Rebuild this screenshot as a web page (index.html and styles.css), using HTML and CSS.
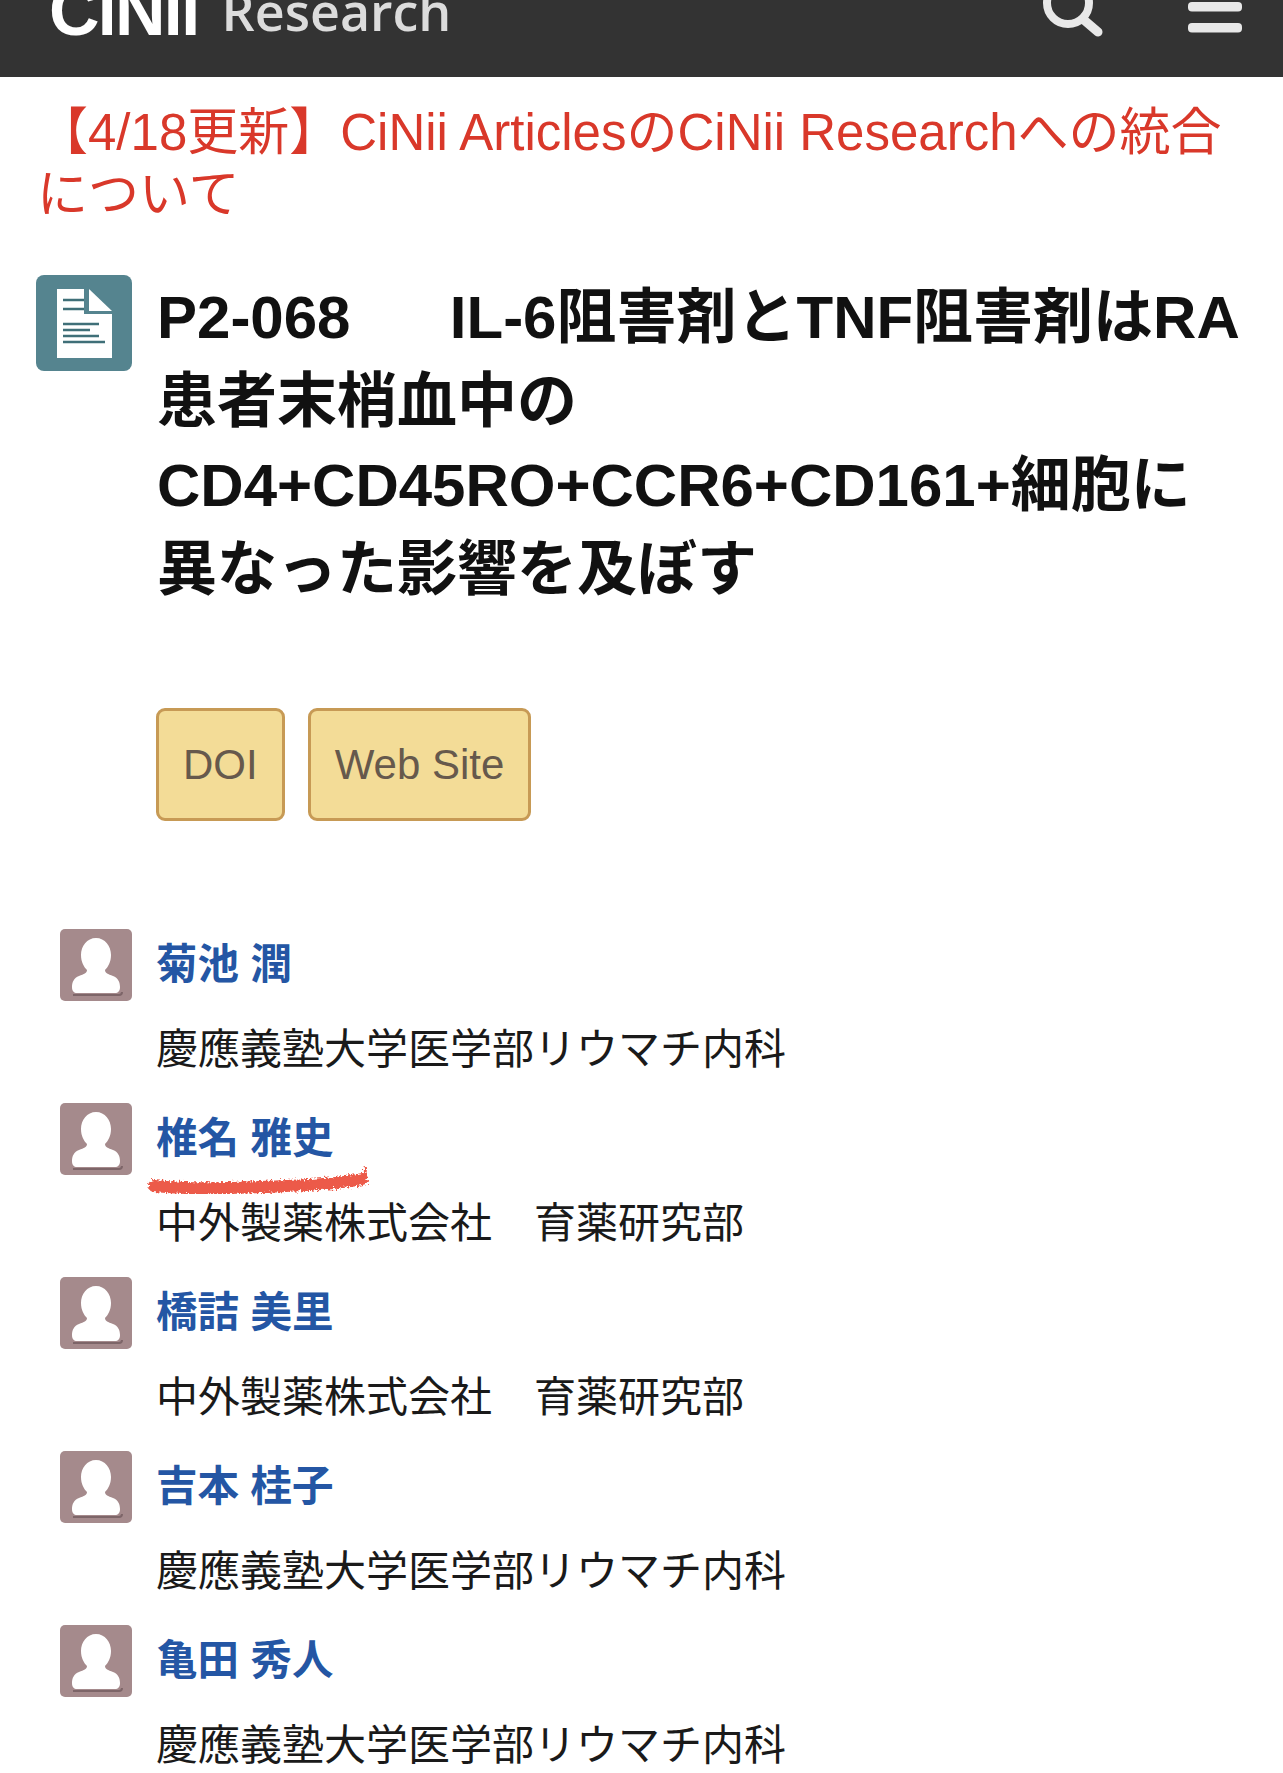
FILE: index.html
```html
<!DOCTYPE html>
<html lang="ja">
  <head>
    <meta charset="utf-8" />
    <title>CiNii Research</title>
    <link rel="stylesheet" href="styles.css">
  </head>
  <body>
    <header class="top-bar">
      <div class="logo">
        <span class="logo-cinii">CiNii</span>
        <span class="logo-research">Research</span>
      </div>
      <div class="top-icons">
        <svg class="icon-search" width="60" height="44" viewBox="0 0 60 44">
          <circle cx="25" cy="3" r="21" fill="none" stroke="#e8e8e8" stroke-width="8" />
          <line x1="41" y1="20" x2="55" y2="32" stroke="#e8e8e8" stroke-width="9" stroke-linecap="round" />
        </svg>
        <svg class="icon-menu" width="54" height="34" viewBox="0 0 54 34">
          <rect x="0" y="2" width="54" height="9.5" rx="4" fill="#e8e8e8" />
          <rect x="0" y="23" width="54" height="9.5" rx="4" fill="#e8e8e8" />
        </svg>
      </div>
    </header>

    <p class="notice">【4/18更新】CiNii ArticlesのCiNii Researchへの統合について</p>

    <section class="title-row">
      <div class="doc-icon">
        <svg width="96" height="96" viewBox="0 0 96 96">
          <path d="M21 14H48V39H76V83H21Z" fill="#fff" />
          <path d="M53 14L76 36H53Z" fill="#fff" />
          <path d="M27 25H48M27 34H48M27 49H63M27 55H54M27 61H63M27 67H69" stroke="#3f6f78" stroke-width="2.6" />
        </svg>
      </div>
      <div class="title-body">
        <h1>P2-068　&nbsp;&nbsp;IL-6阻害剤とTNF阻害剤はRA患者末梢血中の<br>CD4+CD45RO+CCR6+CD161+細胞に異なった影響を及ぼす</h1>
        <div class="links">
          <a class="link-btn">DOI</a>
          <a class="link-btn">Web Site</a>
        </div>
      </div>
    </section>

    <ul class="authors">
      <li class="author">
        <svg class="avatar" viewBox="0 0 72 72"><use href="#person" /></svg>
        <a class="author-name">菊池 潤</a>
        <div class="author-org">慶應義塾大学医学部リウマチ内科</div>
      </li>
      <li class="author marked">
        <svg class="avatar" viewBox="0 0 72 72"><use href="#person" /></svg>
        <a class="author-name">椎名 雅史</a>
        <div class="author-org">中外製薬株式会社　育薬研究部</div>
        <svg class="scribble" width="226" height="34" viewBox="0 0 226 34">
          <defs>
            <filter id="rough" x="-5%" y="-60%" width="110%" height="220%">
              <feTurbulence type="fractalNoise" baseFrequency="0.45" numOctaves="3" seed="4" />
              <feDisplacementMap in="SourceGraphic" scale="7" />
              <feGaussianBlur stdDeviation="0.6" />
            </filter>
          </defs>
          <path d="M8 23C50 27 95 25 140 23C165 22 195 21 216 16" fill="none" stroke="#ec5a48" stroke-width="12" stroke-linecap="round" filter="url(#rough)" />
          <path d="M216 16C219 14 220 11 220 6" fill="none" stroke="#ec5a48" stroke-width="4" stroke-linecap="round" filter="url(#rough)" />
        </svg>
      </li>
      <li class="author">
        <svg class="avatar" viewBox="0 0 72 72"><use href="#person" /></svg>
        <a class="author-name">橋詰 美里</a>
        <div class="author-org">中外製薬株式会社　育薬研究部</div>
      </li>
      <li class="author">
        <svg class="avatar" viewBox="0 0 72 72"><use href="#person" /></svg>
        <a class="author-name">吉本 桂子</a>
        <div class="author-org">慶應義塾大学医学部リウマチ内科</div>
      </li>
      <li class="author">
        <svg class="avatar" viewBox="0 0 72 72"><use href="#person" /></svg>
        <a class="author-name">亀田 秀人</a>
        <div class="author-org">慶應義塾大学医学部リウマチ内科</div>
      </li>
    </ul>

    <svg class="sprites" width="0" height="0">
      <symbol id="person" viewBox="0 0 72 72">
        <rect width="72" height="72" rx="5" fill="#a58a8c" />
        <path d="M13 66H59C61 66 62 65 62 63" fill="none" stroke="#7d6568" stroke-width="2" />
        <path d="M36 9C45 9 51 17 51 26C51 33 48 38 45 41C45 44 48 45 53 47C58 49 60 53 60 58C60 62 58 64 55 64H17C14 64 12 62 12 58C12 53 14 49 19 47C24 45 27 44 27 41C24 38 21 33 21 26C21 17 27 9 36 9Z" fill="#fff" />
      </symbol>
    </svg>
  </body>
</html>
```

FILE: styles.css
```css
html {
  background-color: #ffffff;
}

body {
  margin: 0;
  height: 1773px;
  overflow: hidden;
  font-family: "Liberation Sans", "Noto Sans CJK JP", sans-serif;
  color: #1a1a1a;
  background-color: #ffffff;
}

.top-bar {
  display: flex;
  justify-content: space-between;
  align-items: flex-start;
  height: 77px;
  padding: 0 41px 0 49px;
  background-color: #333333;
  overflow: hidden;
}

.logo {
  display: flex;
  align-items: baseline;
  gap: 23px;
  margin-top: -24px;
  color: #ffffff;
}

.logo-cinii {
  font-size: 70px;
  font-weight: bold;
  letter-spacing: -2px;
  line-height: 70px;
}

.logo-research {
  font-family: "Open Sans", sans-serif;
  font-size: 52px;
  font-weight: 600;
  color: #dcdcdc;
  position: relative;
  top: -4px;
}

.top-icons {
  display: flex;
  gap: 85px;
}

.notice {
  margin: 0;
  padding: 25px 40px 0 37px;
  font-size: 51px;
  line-height: 62px;
  color: #d9382a;
}

.title-row {
  display: flex;
  align-items: flex-start;
  gap: 25px;
  margin-top: 49px;
  padding: 0 36px;
}

.doc-icon {
  flex: none;
  width: 96px;
  height: 96px;
  border-radius: 8px;
  background-color: #55848f;
}

.doc-icon svg {
  display: block;
}

.title-body {
  flex: 1;
  padding-top: 1px;
}

h1 {
  margin: 0;
  font-size: 60px;
  line-height: 84px;
  font-weight: bold;
  word-spacing: 3px;
  color: #111111;
}

.links {
  display: flex;
  gap: 23px;
  margin-top: 96px;
  margin-left: -1px;
}

.link-btn {
  padding: 29px 24px;
  border: 3px solid #c79a55;
  border-radius: 9px;
  background-color: #f3dc97;
  font-size: 42px;
  line-height: 49px;
  color: #66594c;
}

.authors {
  list-style: none;
  margin: 108px 0 0;
  padding: 0 0 0 60px;
}

.author {
  position: relative;
  display: grid;
  grid-template-columns: 72px 1fr;
  grid-template-rows: 72px auto;
  column-gap: 25px;
  height: 174px;
}

.avatar {
  grid-row: 1;
  width: 72px;
  height: 72px;
}

.author-name {
  margin-left: -1px;
  font-size: 41.5px;
  font-weight: bold;
  line-height: 72px;
  color: #2456a4;
}

.author-org {
  margin-top: 19px;
  margin-left: -1px;
  font-size: 42px;
  line-height: 60px;
  color: #1a1a1a;
  grid-column: 2;
}

.scribble {
  position: absolute;
  left: 86px;
  top: 60px;
}

.sprites {
  position: absolute;
}
```
